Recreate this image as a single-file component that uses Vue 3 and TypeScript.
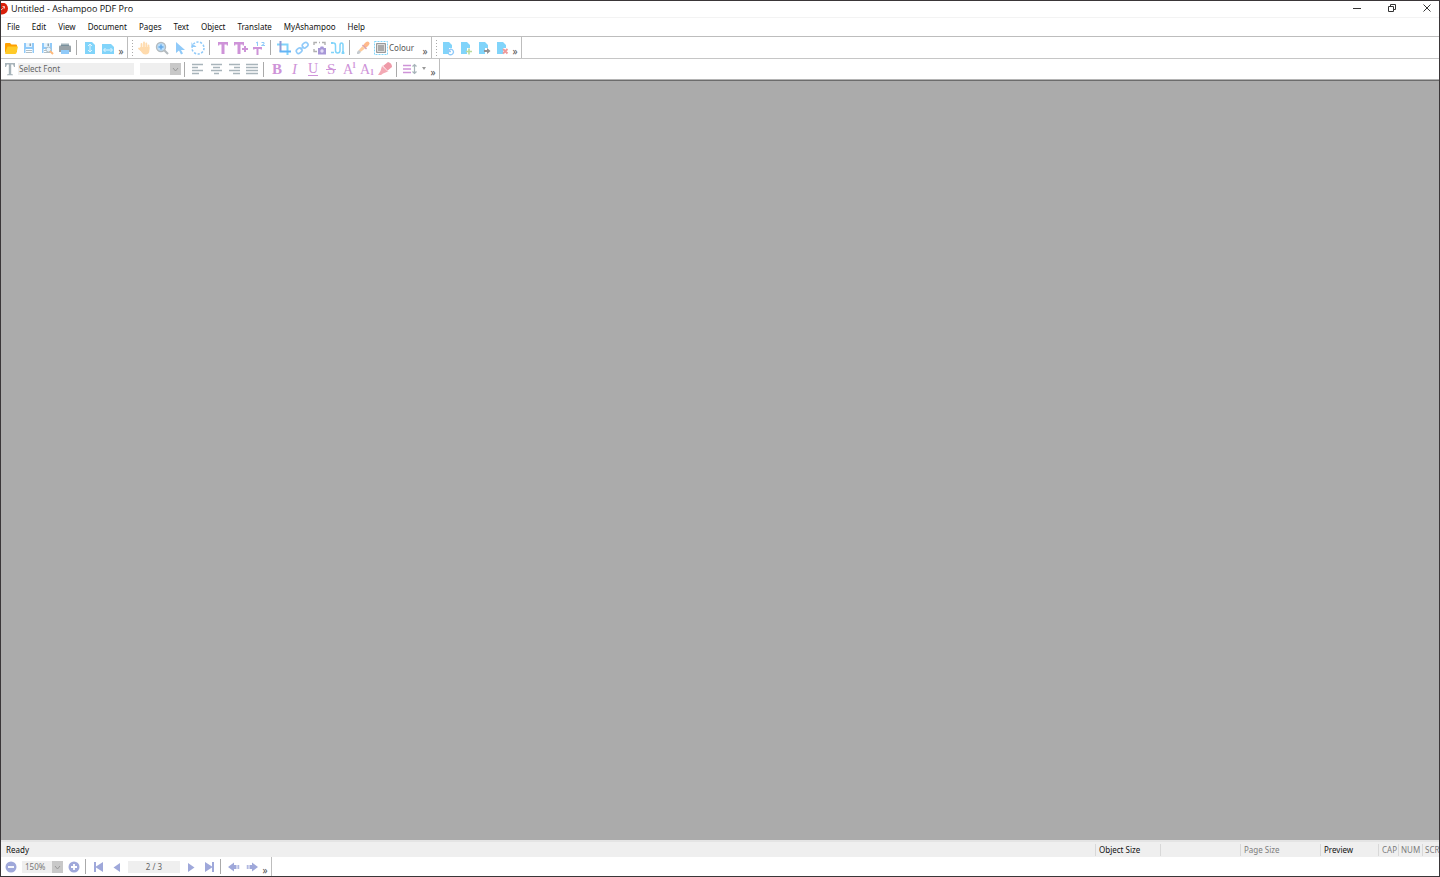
<script setup lang="ts">
import { ref } from 'vue'

interface Tool { icon: string; label: string; text?: string; sep?: boolean; live?: boolean }

const T = '<path fill="#ce93d8" d="M3 2h10v3.500h-1.300V4.500H9.500V14h-3V4.500H4.300v1H3z"/>'
const page = '<path fill="#81d4fa" d="M3 2h6l3 3v3H9v6H3z"/>'
const floppy = '<path fill="#90caf9" d="M3 3h10v10H3z"/><path fill="#e3f2fd" d="M5 3h6v4H5z"/><path fill="#90a4ae" d="M8.500 3.500h1.500v2.500H8.500z"/><path fill="#fff" d="M4.500 9h7v4h-7z"/><path stroke="#b0bec5" d="M5 10.500h6M5 12.500h6"/>'
const lines = (rows: number[][]) =>
  `<path stroke="#a8b4ba" stroke-width="1.400" d="${rows.map(([x, w], i) => `M${x} ${3.5 + i * 3}h${w}`).join('')}"/>`
const glyph = (x: number, y: number, size: number, ch: string, extra = '') =>
  `<text x="${x}" y="${y}" font-family="Liberation Serif, serif" font-size="${size}" fill="#ce93d8" ${extra}>${ch}</text>`

const icons: Record<string, string> = {
  open: '<path fill="#ffa000" d="M2 4q0-1 1-1h4l1.500 1.500H13q1 0 1 1V12H2z"/><path fill="#ffca28" d="M4.500 6.500h10.500l-1.500 6.500q-.3 1-1.500 1H3q-1 0-1-1z"/>',
  save: floppy,
  saveAs: floppy + '<circle cx="9.500" cy="9.500" r="2.500" fill="#e3f2fd" stroke="#b0bec5"/><path stroke="#ffb97a" stroke-width="2" d="m11 11 3 3"/>',
  print: '<path fill="#cfd8dc" d="M4 3h8v3H4z"/><path fill="#98a2a8" d="M3 5.500h10q1 0 1 1V12H2V6.500q0-1 1-1z"/><path fill="#78909c" d="M4 4.500h8v1.500H4z"/><path fill="#90caf9" d="M4 10h8v4H4z"/>',
  fitPage: '<path fill="#81d4fa" d="M3 2h7l3 3v9H3z"/><path fill="none" stroke="#e1f5fe" d="M8 4.500v7M6 6l2-2 2 2M6 10l2 2 2-2"/>',
  fitWidth: '<path fill="#81d4fa" d="M2 4h9l3 3v7H2z"/><path fill="none" stroke="#e1f5fe" d="M4 10h8M5.500 8l-2 2 2 2M10.500 8l2 2-2 2"/>',
  hand: '<path fill="none" stroke="#ffdbad" stroke-width="1.800" stroke-linecap="round" d="M5.500 8V4M8 8V2.500M10.300 8V3.500M12.500 9V5.500M5 10 3 8.500"/><path fill="#ffdbad" d="M4.600 7h8.800v3.500q0 4-4 4-2.500 0-4-2.500L3 8.500z"/>',
  zoom: '<path stroke="#b4bbbf" stroke-width="2.200" d="m10 10 4 4"/><circle cx="7" cy="7" r="4.500" fill="#bbdefb" stroke="#b4bbbf" stroke-width="1.400"/><path stroke="#64a9e8" stroke-width="1.500" d="M4.500 7h5M7 4.500v5"/>',
  select: '<path fill="#90caf9" d="M4 2v11l3-2.500 2 4 2-1-2-3.500h4z"/>',
  rotate: '<circle cx="8" cy="8" r="6" fill="none" stroke="#90caf9" stroke-width="1.500" stroke-dasharray="2.200 1.500"/><path fill="#90caf9" d="M1.500 2v5h5L5 5.500 3 5z"/>',
  text: T,
  textAdd: '<path fill="#ce93d8" d="M1 2h10v3.500H9.700v-1H7.500V14h-3V4.500H2.300v1H1z"/><path stroke="#ce93d8" stroke-width="2" d="M12 6v6M9 9h6"/>',
  textNumber: '<path fill="#ce93d8" d="M2 7h9v2.500H9.500V9H7.500v6h-2V9h-2v.5H2z"/><path fill="none" stroke="#90caf9" d="M6.500 6V2L5 3M10.500 2.500h2.500V4l-2.500 1.500H14"/>',
  crop: '<path fill="none" stroke="#81d4fa" stroke-width="2" d="M1 4.500h10.500V15"/><path fill="none" stroke="#8f9bd6" stroke-width="2" d="M4.500 1v10.500"/><path fill="none" stroke="#64b5f6" stroke-width="2" d="M3.500 11.500H15"/>',
  link: '<g fill="none" stroke="#90caf9" stroke-width="1.600"><rect x="2" y="8.500" width="6" height="4.500" rx="2.200" transform="rotate(-40 5 10.500)"/><rect x="8" y="3" width="6" height="4.500" rx="2.200" transform="rotate(-40 11 5)"/><path d="m6.500 9.500 3-3"/></g>',
  snapshot: '<path fill="none" stroke="#b0b0b0" stroke-width="1.400" d="M2 5V2.500h3M10 2.500h3V5M2 9v2.500h3M7 2.500h1"/><path fill="#a797d7" d="M6 8h2l.7-1.500h2.600L12 8h2v6.500H6z"/><circle cx="10" cy="11" r="1.700" fill="#e2dcf6"/>',
  path: '<path fill="none" stroke="#81d4fa" stroke-width="1.500" d="M2 3h1.500q2 0 2 2.500v5q0 2.500 2.200 2.500T10 10.500v-5Q10 3 11.500 3t1.500 2v8M1 12.500h3M11.500 13h3"/><path fill="#81d4fa" d="M1 2h2v2H1zM12 11h2v3h-2z"/>',
  dropper: '<path stroke="#ffb98a" stroke-width="4" stroke-linecap="round" d="m10.500 5.500 2-2"/><path stroke="#d7a0b0" stroke-width="1.500" d="m7.500 5 4 4"/><path fill="#ffcc9c" d="m7.500 6 2.500 2.500L5.500 12l-2-1.500z"/><path fill="#c6cbd0" d="m4 10 2 2-2 2H2v-2z"/>',
  swatch: '<path fill="none" stroke="#81d4fa" stroke-dasharray="2 1" d="M1.500 1.500h13v13h-13z"/><path fill="#aaa" stroke="#9a9a9a" d="M3.500 3.500h9v9h-9z"/><path fill="none" stroke="#dcdcdc" d="M4.500 4.500h7v7h-7z"/>',
  pageTurn: page + '<path fill="none" stroke="#90caf9" stroke-width="1.300" d="M8 8.500v3h3M8.500 11q2-3 4-1t0 4q-2 1.500-4 0"/>',
  pageAdd: page + '<path stroke="#b9d99b" stroke-width="1.600" d="M11 8.500v6M8 11.500h6"/>',
  pageExport: page + '<path fill="#929292" d="M8 10h3V8l3.500 3-3.500 3v-2H8z"/>',
  pageDelete: page + '<path stroke="#ef9a9a" stroke-width="1.900" d="m9 9 4.500 4.500m0-4.500L9 13.500"/>',
  left: lines([[2, 11], [2, 6], [2, 11], [2, 7]]),
  center: lines([[3, 11], [5, 7], [3, 11], [6, 5]]),
  right: lines([[3, 11], [8, 6], [3, 11], [7, 7]]),
  justify: lines([[2, 12], [2, 12], [2, 12], [2, 12]]),
  bold: glyph(3, 13, 15, 'B', 'font-weight="bold"'),
  italic: glyph(5, 13, 15, 'I', 'font-style="italic"'),
  underline: glyph(3, 12, 14, 'U') + '<path stroke="#ce93d8" d="M3 14.500h10"/>',
  strike: glyph(4, 13, 15, 'S') + '<path stroke="#ce93d8" d="M3 8.500h10"/>',
  superscript: glyph(2, 13, 14, 'A') + glyph(11, 7, 8, '1', 'font-weight="bold"'),
  subscript: glyph(1, 13, 14, 'A') + glyph(11, 14, 8, '1', 'font-weight="bold"'),
  marker: '<path fill="#ef9aa8" d="m6 5 5-4q4 1 4 5l-5 4z"/><path fill="#f3a9b4" d="m5 5 6 5.500-5 2L4 14H1l2.500-4z"/><path stroke="#fbdde2" d="m5.500 4.500 5.500 6"/>',
  spacing: '<path stroke="#ce93d8" stroke-width="1.700" d="M1 4.500h8M1 8h8M1 11.500h8"/><path fill="none" stroke="#a8b4ba" stroke-width="1.200" d="M12.500 4v8M10.500 5.500l2-2 2 2M10.500 10.500l2 2 2-2"/>',
  fontT: '<path fill="#a8b4ba" d="M3 2h10v4h-1L11 3.500H9.200V13l1.800.5v.7H5v-.7l1.800-.5V3.500H5L4 6H3z"/>',
  minus: '<circle cx="8" cy="8" r="5.500" fill="#9fa8da"/><path stroke="#fff" stroke-width="1.800" d="M5 8h6"/>',
  plus: '<circle cx="8" cy="8" r="5.500" fill="#9fa8da"/><path stroke="#fff" stroke-width="1.800" d="M5 8h6M8 5v6"/>',
  first: '<path fill="#9fa8da" d="M3 3h2v4.500L12 3v10L5 8.500V13H3z"/>',
  prev: '<path fill="#9fa8da" d="M11 4v9L4.500 8.500z"/>',
  next: '<path fill="#9fa8da" d="M5 4v9l6.500-4.500z"/>',
  last: '<path fill="#9fa8da" d="M13 3h-2v4.500L4 3v10l7-4.500V13h2z"/>',
  back: '<path fill="#9fa8da" d="M2 8 8 3.500V6h2v4H8v2.500zM10.500 6h1v4h-1zM12.200 6h1v4h-1z"/>',
  forward: '<path fill="#9fa8da" d="M14 8 8 3.500V6H6v4h2v2.500zM4.500 6h1v4h-1zM2.800 6h1v4h-1z"/>'
}

const menus = ['File', 'Edit', 'View', 'Document', 'Pages', 'Text', 'Object', 'Translate', 'MyAshampoo', 'Help']

const bands: Tool[][] = [
  [
    { icon: 'open', label: 'Open', live: true }, { icon: 'save', label: 'Save' },
    { icon: 'saveAs', label: 'Save as' }, { icon: 'print', label: 'Print' },
    { icon: 'fitPage', label: 'Fit page', sep: true }, { icon: 'fitWidth', label: 'Fit width' }
  ],
  [
    { icon: 'hand', label: 'Pan' }, { icon: 'zoom', label: 'Zoom' }, { icon: 'select', label: 'Select' }, { icon: 'rotate', label: 'Rotate' },
    { icon: 'text', label: 'Edit text', sep: true }, { icon: 'textAdd', label: 'Add text' }, { icon: 'textNumber', label: 'Numbering' },
    { icon: 'crop', label: 'Crop', sep: true }, { icon: 'link', label: 'Link' }, { icon: 'snapshot', label: 'Snapshot' }, { icon: 'path', label: 'Connect text' },
    { icon: 'dropper', label: 'Pick colour', sep: true }, { icon: 'swatch', label: 'Colour', text: 'Colour' }
  ],
  [
    { icon: 'pageTurn', label: 'Rotate page' }, { icon: 'pageAdd', label: 'Insert page' },
    { icon: 'pageExport', label: 'Extract page' }, { icon: 'pageDelete', label: 'Delete page' }
  ]
]

const formatting: Tool[] = [
  { icon: 'left', label: 'Align left', sep: true }, { icon: 'center', label: 'Align centre' },
  { icon: 'right', label: 'Align right' }, { icon: 'justify', label: 'Justify' },
  { icon: 'bold', label: 'Bold', sep: true }, { icon: 'italic', label: 'Italic' }, { icon: 'underline', label: 'Underline' },
  { icon: 'strike', label: 'Strikethrough' }, { icon: 'superscript', label: 'Superscript' },
  { icon: 'subscript', label: 'Subscript' }, { icon: 'marker', label: 'Highlight' },
  { icon: 'spacing', label: 'Line spacing', sep: true }
]

const status = [
  { text: 'Object Size', kind: 'size', strong: true }, { text: '', kind: 'wide' },
  { text: 'Page Size', kind: 'wide' }, { text: 'Preview', kind: 'mode', strong: true },
  { text: 'CAP', kind: 'caps' }, { text: 'NUM', kind: 'num' }, { text: 'SCR', kind: 'lock' }
]

const fontName = ref('Select Font')
const zoomLevel = ref('150%')
const pageNumber = ref('2 / 3')
</script>

<template>
  <div class="window">
    <header class="title">
      <svg class="logo" viewBox="0 0 8 12" aria-hidden="true">
        <circle cx="1" cy="5.500" r="6" fill="#d9200b" />
        <path fill="none" d="M0 7 3.500 4M1.500 3.500h2v2" stroke="#f6c5bd" />
      </svg>
      <h1>Untitled - Ashampoo PDF Pro</h1>
      <div class="controls">
        <button type="button" aria-label="Minimise"><svg viewBox="0 0 10 10"><path d="M1 5.500h8" /></svg></button>
        <button type="button" aria-label="Restore"><svg viewBox="0 0 10 10"><path d="M1.500 3.500h5v5h-5zM3.500 3.500v-2h5v5h-2" /></svg></button>
        <button type="button" aria-label="Close"><svg viewBox="0 0 10 10"><path d="m1.500 1.500 7 7m0-7-7 7" /></svg></button>
      </div>
    </header>

    <nav class="menu">
      <button v-for="item in menus" :key="item" type="button">{{ item }}</button>
    </nav>

    <div class="row">
      <div v-for="(band, i) in bands" :key="i" class="band" role="toolbar">
        <span v-if="i" class="grip"></span>
        <template v-for="tool in band" :key="tool.icon">
          <span v-if="tool.sep" class="sep"></span>
          <button type="button" class="tool" :aria-label="tool.label" :disabled="!tool.live">
            <svg viewBox="0 0 16 16" v-html="icons[tool.icon]"></svg>
            <span v-if="tool.text" class="caption">{{ tool.text }}</span>
          </button>
        </template>
        <button type="button" class="more" aria-label="More tools">»</button>
      </div>
    </div>

    <div class="row formats">
      <div class="band" role="toolbar">
        <label class="font">
          <svg viewBox="0 0 16 16" v-html="icons.fontT"></svg>
          <input v-model="fontName" type="text" aria-label="Font" disabled />
        </label>
        <span class="combo size">
          <select aria-label="Font size" disabled><option></option></select>
          <svg viewBox="0 0 11 12"><path d="m3 5 2.500 3L8 5" /></svg>
        </span>
        <template v-for="tool in formatting" :key="tool.icon">
          <span v-if="tool.sep" class="sep"></span>
          <button type="button" class="tool" :aria-label="tool.label" disabled>
            <svg viewBox="0 0 16 16" v-html="icons[tool.icon]"></svg>
          </button>
        </template>
        <button type="button" class="drop" aria-label="Line spacing options" disabled>
          <svg viewBox="0 0 6 4"><path d="M1 0h4L3 3z" fill="#999" /></svg>
        </button>
        <button type="button" class="more" aria-label="More formatting">»</button>
      </div>
    </div>

    <main class="workspace"></main>

    <footer>
      <div class="status">
        <span class="ready">Ready</span>
        <span v-for="cell in status" :key="cell.kind + cell.text" class="cell" :class="[cell.kind, { strong: cell.strong }]">{{ cell.text }}</span>
      </div>
      <div class="row bottom">
        <div class="band" role="toolbar">
          <button type="button" class="tool" aria-label="Zoom out" disabled><svg viewBox="0 0 16 16" v-html="icons.minus"></svg></button>
          <span class="combo zoom">
            <select v-model="zoomLevel" aria-label="Zoom" disabled><option>150%</option></select>
            <svg viewBox="0 0 11 12"><path d="m3 5 2.500 3L8 5" /></svg>
          </span>
          <button type="button" class="tool" aria-label="Zoom in" disabled><svg viewBox="0 0 16 16" v-html="icons.plus"></svg></button>
          <span class="sep"></span>
          <button type="button" class="tool" aria-label="First page" disabled><svg viewBox="0 0 16 16" v-html="icons.first"></svg></button>
          <button type="button" class="tool" aria-label="Previous page" disabled><svg viewBox="0 0 16 16" v-html="icons.prev"></svg></button>
          <input v-model="pageNumber" class="page" type="text" aria-label="Page" disabled />
          <button type="button" class="tool" aria-label="Next page" disabled><svg viewBox="0 0 16 16" v-html="icons.next"></svg></button>
          <button type="button" class="tool" aria-label="Last page" disabled><svg viewBox="0 0 16 16" v-html="icons.last"></svg></button>
          <span class="sep"></span>
          <button type="button" class="tool" aria-label="Back" disabled><svg viewBox="0 0 16 16" v-html="icons.back"></svg></button>
          <button type="button" class="tool" aria-label="Forward" disabled><svg viewBox="0 0 16 16" v-html="icons.forward"></svg></button>
          <button type="button" class="more" aria-label="More navigation">»</button>
        </div>
      </div>
    </footer>
  </div>
</template>

<style scoped>
.window {
  box-sizing: border-box;
  min-height: 100vh;
  display: flex;
  flex-direction: column;
  overflow: hidden;
  border: 1px solid #3a3638;
  background: #fff;
  color: #111;
  font: 8px/16px "Noto Sans", "Open Sans", sans-serif;
}
button, input, select {
  font: inherit;
  color: inherit;
  margin: 0;
  padding: 0;
  border: 0;
  background: none;
  box-sizing: border-box;
}
svg { display: block; flex: none; }
.title { display: flex; align-items: center; height: 16px; border-bottom: 1px solid #f3f3f3; }
.logo { width: 8px; height: 12px; margin-right: 2px; }
h1 { margin: 0; font: 400 9px/16px "Open Sans", "Noto Sans", sans-serif; }
.controls { display: flex; margin-left: auto; height: 14px; align-self: flex-start; }
.controls button { width: 24px; margin-left: 11px; display: flex; align-items: center; justify-content: center; }
.controls svg { width: 10px; height: 10px; fill: none; stroke: #333; }
.menu { display: flex; height: 18px; border-bottom: 1px solid #bdbdbd; }
.menu button { padding: 0 6px; line-height: 18px; }
.row { display: flex; height: 21px; border-bottom: 1px solid #c6c6c6; }
.formats { height: 20px; border-bottom: 1px solid #b4b4b4; }
.band { display: flex; align-items: center; padding: 0 2px 0 1px; border-right: 1px solid #bdbdbd; }
.band + .band { padding-left: 0; }
.grip { width: 7px; height: 16px; background: repeating-linear-gradient(#aaa 0 1px, #fff 1px 3px) 4px 0 / 1px 100% no-repeat; }
.tool { display: flex; align-items: center; min-width: 18px; height: 18px; padding: 0 1px; }
.tool svg, .font svg { width: 16px; height: 16px; }
.caption { color: #555; padding-right: 6px; }
.sep { width: 7px; height: 15px; background: linear-gradient(#aaa, #aaa) 2px 0 / 1px 100% no-repeat; }
.more { width: 8px; height: 16px; padding-top: 6px; line-height: 10px; font-size: 10px; color: #555; }
.font { display: flex; align-items: center; margin-right: 6px; }
.font input { width: 116px; height: 12px; padding-left: 1px; background: #efefef; color: #666; }
.combo { display: flex; height: 12px; }
.combo select { appearance: none; height: 12px; line-height: 12px; background: #efefef; color: #777; opacity: 1; }
.combo svg { width: 11px; height: 12px; background: #c8c8c8; fill: none; stroke: #999; }
.size { margin-right: 1px; }
.size select { width: 30px; }
.zoom { margin: 0 2px; }
.zoom select { width: 30px; padding-left: 3px; }
.page { width: 52px; height: 12px; margin: 0 2px; background: #efefef; color: #666; text-align: center; }
.drop { width: 10px; height: 16px; display: flex; align-items: center; justify-content: center; }
.drop svg { width: 6px; height: 4px; }
.workspace { flex: 1; background: #ababab; border-top: 1px solid #6c6c6c; }
.status { display: flex; align-items: center; height: 14px; padding-top: 1px; background: #efefef; border-top: 2px solid #e4e4e4; }
.ready { flex: 1; padding-left: 5px; }
.cell { box-sizing: border-box; height: 12px; line-height: 12px; padding-left: 3px; border-left: 1px solid #d8d8d8; color: #7c7c7c; white-space: nowrap; }
.strong { color: #111; }
.size.cell { width: 65px; margin: 0; }
.wide { width: 80px; }
.mode { width: 58px; }
.caps { width: 20px; }
.num { width: 24px; padding-left: 2px; }
.lock { width: 17px; padding-left: 2px; }
.bottom { height: 19px; border-bottom: 0; }
</style>

<style>
body { margin: 0; }
</style>
